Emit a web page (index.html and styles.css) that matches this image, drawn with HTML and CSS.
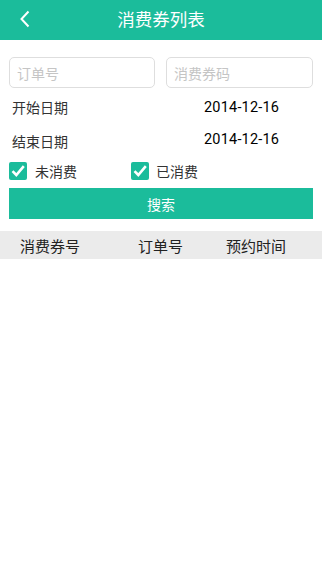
FILE: index.html
```html
<!DOCTYPE html>
<html lang="zh-CN">
<head>
<meta charset="utf-8">
<title>消费券列表</title>
<link rel="stylesheet" href="styles.css">
</head>
<body>
<header class="topbar">
  <span class="back">
    <svg width="12" height="18" viewBox="0 0 12 18"><path d="M9.5 1.5 L2.5 9 L9.5 16.5" fill="none" stroke="#fff" stroke-width="2"/></svg>
  </span>
  <h1 class="title">消费券列表</h1>
</header>
<main class="form">
  <div class="inputs">
    <input class="field" type="text" placeholder="订单号">
    <input class="field" type="text" placeholder="消费券码">
  </div>
  <div class="daterow">
    <span class="label">开始日期</span>
    <span class="date">2014-12-16</span>
  </div>
  <div class="daterow second">
    <span class="label">结束日期</span>
    <span class="date">2014-12-16</span>
  </div>
  <div class="checks">
    <label class="check">
      <svg class="box" width="18" height="18" viewBox="0 0 18 18"><rect width="18" height="18" rx="2" fill="#1bbc9b"/><path d="M3.5 9.2 L7.3 13 L14.8 4.2" fill="none" stroke="#fff" stroke-width="2.6"/></svg>
      <span>未消费</span>
    </label>
    <label class="check">
      <svg class="box" width="18" height="18" viewBox="0 0 18 18"><rect width="18" height="18" rx="2" fill="#1bbc9b"/><path d="M3.5 9.2 L7.3 13 L14.8 4.2" fill="none" stroke="#fff" stroke-width="2.6"/></svg>
      <span>已消费</span>
    </label>
  </div>
  <button class="search">搜索</button>
</main>
<div class="thead">
  <span>消费券号</span>
  <span>订单号</span>
  <span>预约时间</span>
</div>
</body>
</html>
```
FILE: styles.css
```css
* { box-sizing: border-box; }
body {
  margin: 0;
  background: #fff;
  font-family: "Liberation Sans", "Noto Sans CJK SC", sans-serif;
  color: #333;
}
.topbar {
  height: 40px;
  background: #1bbc9b;
  display: flex;
  align-items: center;
  justify-content: center;
  position: relative;
}
.back {
  position: absolute;
  left: 19px;
  top: 10px;
  display: flex;
}
.title {
  margin: 0;
  font-size: 17.5px;
  font-weight: normal;
  color: #fff;
  font-family: "Noto Sans CJK SC", sans-serif;
  line-height: 1;
  margin-top: -2px;
}
.form {
  padding: 17px 9px 0;
}
.inputs {
  display: grid;
  grid-template-columns: 146px 147px;
  column-gap: 11px;
}
.field {
  height: 31px;
  border: 1px solid #dedede;
  border-radius: 5px;
  padding: 0 7px;
  font-family: "Noto Sans CJK SC", sans-serif;
  font-size: 14px;
  outline: none;
}
.field::placeholder { color: #c5c5c5; }
.daterow {
  display: grid;
  grid-template-columns: 192px auto;
  align-items: center;
  height: 34px;
  padding-left: 3px;
  margin-top: 2px;
}
.daterow.second { margin-top: 0; }
.daterow.second .date { margin-top: -4px; }
.label {
  font-family: "Noto Sans CJK SC", sans-serif;
  font-size: 14px;
  color: #333;
}
.date {
  font-family: Roboto, "Liberation Sans", sans-serif;
  font-size: 14.5px;
  color: #000;
  letter-spacing: 0.2px;
}
.checks {
  display: flex;
  height: 24px;
  align-items: center;
  margin-top: 1px;
}
.check {
  display: flex;
  align-items: center;
  gap: 8px;
  width: 122px;
  font-family: "Noto Sans CJK SC", sans-serif;
  font-size: 14px;
  color: #333;
}
.check + .check { gap: 7px; }
.box { display: block; }
.search {
  display: block;
  width: 100%;
  height: 31px;
  margin-top: 5px;
  border: none;
  background: #1bbc9b;
  color: #fff;
  font-family: "Noto Sans CJK SC", sans-serif;
  font-size: 14px;
  padding: 0;
}
.thead {
  margin-top: 12px;
  height: 28px;
  background: #ebebeb;
  display: grid;
  grid-template-columns: 118px 88px auto;
  align-items: center;
  padding-left: 20px;
  font-family: "Noto Sans CJK SC", sans-serif;
  font-size: 15px;
  color: #222;
}
```
